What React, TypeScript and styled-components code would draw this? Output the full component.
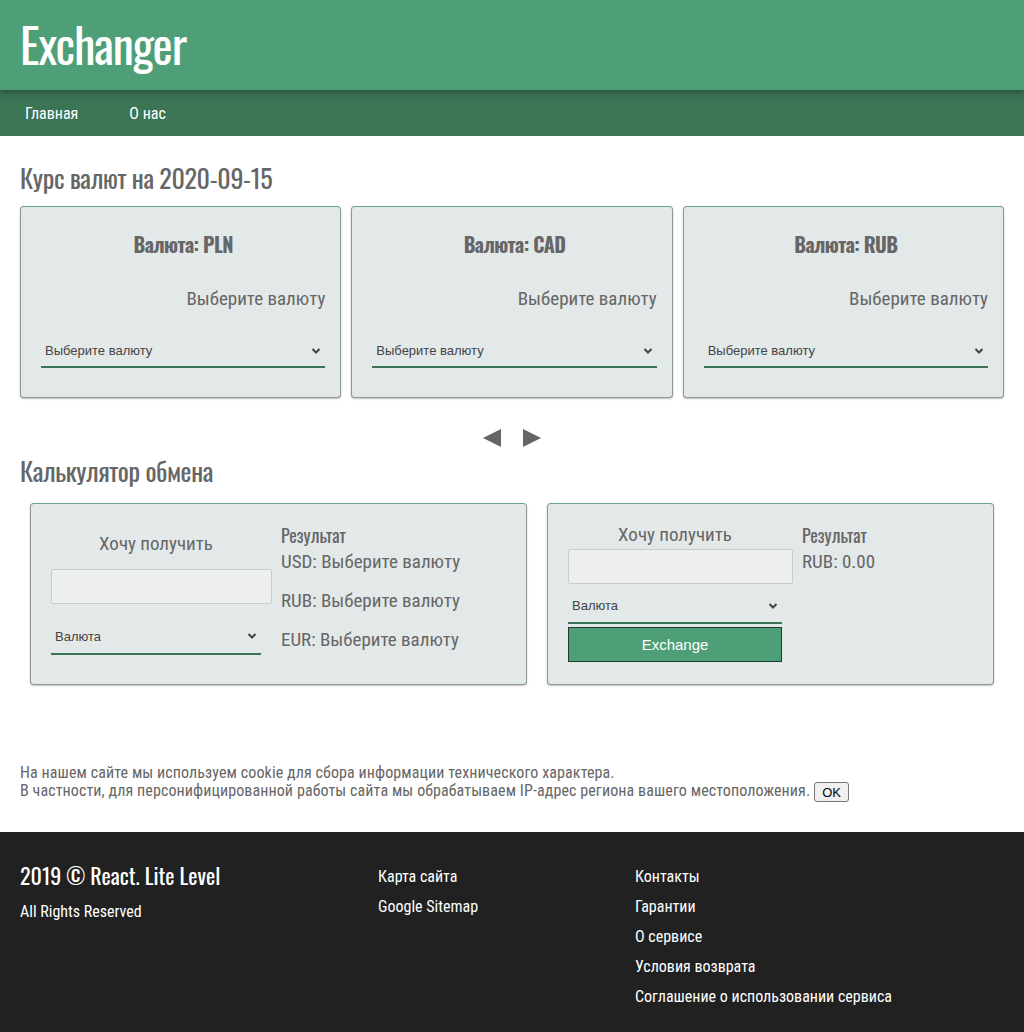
import React from "react";
import styled, { createGlobalStyle } from "styled-components";

const HEAD = `"Oswald", "DejaVu Sans Condensed", "Liberation Sans Narrow", sans-serif`;
const BODY = `"Roboto Condensed", "Liberation Sans Narrow", "Roboto", sans-serif`;
const FORM = `"Liberation Sans", Arial, sans-serif`;

const Global = createGlobalStyle`
  html, body { margin: 0; padding: 0; background: #fff; }
  body { font-family: ${BODY}; color: #666; }
  * { box-sizing: border-box; }
`;

const Header = styled.header`
  background: #4e9f77;
  height: 90px;
  display: flex;
  align-items: center;
  padding: 0 20px 3px;
  position: relative;
  z-index: 1;
  box-shadow: 0 3px 6px rgba(0, 0, 0, 0.3);
`;

const Logo = styled.h1`
  margin: 0;
  font-family: ${HEAD};
  font-weight: 400;
  font-size: 48px;
  letter-spacing: -1.1px;
  color: #fff;
  line-height: 1;
`;

const Nav = styled.nav`
  background: #3b7556;
  height: 46px;
  display: flex;
  align-items: center;
  padding: 0 25px;
  gap: 51px;
`;

const NavLink = styled.a`
  color: #fff;
  font-family: ${BODY};
  font-size: 16px;
  text-decoration: none;
`;

const Main = styled.main`
  padding: 0 20px;
`;

const SectionTitle = styled.h2<{ $top: number }>`
  margin: ${(p) => p.$top}px 0 0;
  font-family: ${HEAD};
  font-weight: 400;
  font-size: 26px;
  letter-spacing: -0.33px;
  line-height: 30px;
  color: #666;
`;

const RateRow = styled.div`
  display: grid;
  grid-template-columns: repeat(3, 1fr);
  gap: 10px;
  margin-top: 13px;
`;

const Card = styled.div`
  background: #e3e8e8;
  border: 1px solid #8d9893;
  border-top-color: #6aa486;
  border-radius: 4px;
  box-shadow: 0 1px 2px rgba(0, 0, 0, 0.25);
`;

const RateCard = styled(Card)`
  height: 192px;
  padding: 23px 15px 0 20px;
  display: flex;
  flex-direction: column;
`;

const RateTitle = styled.div`
  font-family: ${HEAD};
  font-weight: 700;
  font-size: 20px;
  letter-spacing: -0.6px;
  line-height: 28px;
  text-align: center;
  color: #666;
`;

const RateValue = styled.div`
  margin-top: 29px;
  font-family: ${BODY};
  font-size: 19px;
  line-height: 24px;
  text-align: right;
  color: #666;
`;

const SelectWrap = styled.div<{ $w?: number; $mt: number; $h: number }>`
  position: relative;
  width: ${(p) => (p.$w ? `${p.$w}px` : "100%")};
  margin-top: ${(p) => p.$mt}px;
  height: ${(p) => p.$h}px;
`;

const Select = styled.select`
  appearance: none;
  -webkit-appearance: none;
  width: 100%;
  height: 100%;
  border: none;
  border-bottom: 2px solid #3b7556;
  background: transparent;
  font-family: ${FORM};
  font-size: 13px;
  color: #444;
  padding: 0 20px 0 4px;
  outline: none;
`;

const Chevron = styled.svg`
  position: absolute;
  right: 4px;
  top: 50%;
  margin-top: -5px;
  pointer-events: none;
`;

const Arrows = styled.div`
  display: flex;
  justify-content: center;
  gap: 20px;
  margin-top: 30px;
  height: 20px;
`;

const CalcRow = styled.div`
  display: flex;
  gap: 20px;
  padding: 0 10px;
  margin-top: 17px;
`;

const CalcCard = styled(Card)<{ $w: number }>`
  width: ${(p) => p.$w}px;
  height: 182px;
  padding: 19px 20px;
  display: flex;
  gap: 20px;
`;

const InputCol = styled.div<{ $w: number; $lift: number }>`
  width: ${(p) => p.$w}px;
  display: flex;
  flex-direction: column;
  align-self: center;
  margin-top: ${(p) => -2 * p.$lift}px;
`;

const ColLabel = styled.div`
  font-family: ${BODY};
  font-size: 19px;
  line-height: 24px;
  text-align: center;
  color: #666;
`;

const Input = styled.input<{ $w: number; $mt: number }>`
  width: ${(p) => p.$w}px;
  height: 35px;
  margin-top: ${(p) => p.$mt}px;
  background: #eef0ef;
  border: 1px solid #c9cccb;
  border-radius: 2px;
  outline: none;
`;

const ExchangeButton = styled.button`
  margin-top: 3px;
  height: 35px;
  width: 100%;
  background: #4e9f77;
  border: 1px solid #1f3b2c;
  color: #fff;
  font-family: ${FORM};
  font-size: 15px;
`;

const ResultCol = styled.div`
  display: flex;
  flex-direction: column;
`;

const ResultTitle = styled.div`
  font-family: ${HEAD};
  font-weight: 400;
  font-size: 18px;
  line-height: 24px;
  color: #666;
`;

const ResultLine = styled.div<{ $mt: number }>`
  margin-top: ${(p) => p.$mt}px;
  font-family: ${BODY};
  font-size: 19px;
  line-height: 24px;
  color: #666;
`;

const Cookie = styled.div`
  margin-top: 79px;
  font-family: ${BODY};
  font-size: 16px;
  letter-spacing: 0.1px;
  line-height: 18px;
  color: #666;
`;

const OkButton = styled.button`
  font-family: ${FORM};
  font-size: 13px;
  letter-spacing: 0;
  padding: 0 7px;
  height: 20px;
  margin-left: 4px;
  border: 1px solid #777;
  border-radius: 3px;
  background: #f0f0f0;
  color: #000;
  vertical-align: middle;
`;

const Footer = styled.footer`
  margin-top: 30px;
  background: #212121;
  min-height: 210px;
  padding: 30px 20px 24px;
  display: grid;
  grid-template-columns: 358px 257px 1fr;
`;

const FooterCol = styled.div`
  display: flex;
  flex-direction: column;
`;

const FooterBrand = styled.div`
  font-family: ${HEAD};
  font-size: 22px;
  line-height: 26px;
  color: #fff;
`;

const FooterText = styled.div`
  margin-top: 14px;
  font-family: ${BODY};
  font-size: 16px;
  line-height: 20px;
  color: #fff;
`;

const FooterLink = styled.a`
  font-family: ${BODY};
  font-size: 16px;
  line-height: 30px;
  color: #fff;
  text-decoration: none;
`;

const ChevronIcon = () => (
  <Chevron width="10" height="8" viewBox="0 0 10 8">
    <path d="M1.5 2 L5 5.5 L8.5 2" fill="none" stroke="#444" strokeWidth="2" />
  </Chevron>
);

const Dropdown = ({
  label,
  w,
  mt,
  h,
}: {
  label: string;
  w?: number;
  mt: number;
  h: number;
}) => (
  <SelectWrap $w={w} $mt={mt} $h={h}>
    <Select defaultValue="">
      <option value="">{label}</option>
    </Select>
    <ChevronIcon />
  </SelectWrap>
);

const currencies = ["PLN", "CAD", "RUB"];

export default function App() {
  return (
    <>
      <Global />
      <Header>
        <Logo>Exchanger</Logo>
      </Header>
      <Nav>
        <NavLink href="#">Главная</NavLink>
        <NavLink href="#">О нас</NavLink>
      </Nav>
      <Main>
        <SectionTitle $top={27}>Курс валют на 2020-09-15</SectionTitle>
        <RateRow>
          {currencies.map((c) => (
            <RateCard key={c}>
              <RateTitle>Валюта: {c}</RateTitle>
              <RateValue>Выберите валюту</RateValue>
              <Dropdown label="Выберите валюту" mt={24} h={33} />
            </RateCard>
          ))}
        </RateRow>
        <Arrows>
          <svg width="20" height="20" viewBox="0 0 20 20">
            <path d="M19 1 L19 19 L1 10 Z" fill="#666" />
          </svg>
          <svg width="20" height="20" viewBox="0 0 20 20">
            <path d="M1 1 L1 19 L19 10 Z" fill="#666" />
          </svg>
        </Arrows>
        <SectionTitle $top={8}>Калькулятор обмена</SectionTitle>
        <CalcRow>
          <CalcCard $w={497}>
            <InputCol $w={210} $lift={1}>
              <ColLabel>Хочу получить</ColLabel>
              <Input $w={221} $mt={13} />
              <Dropdown label="Валюта" mt={16} h={35} />
            </InputCol>
            <ResultCol>
              <ResultTitle>Результат</ResultTitle>
              <ResultLine $mt={3}>USD: Выберите валюту</ResultLine>
              <ResultLine $mt={15}>RUB: Выберите валюту</ResultLine>
              <ResultLine $mt={15}>EUR: Выберите валюту</ResultLine>
            </ResultCol>
          </CalcCard>
          <CalcCard $w={447}>
            <InputCol $w={214} $lift={2}>
              <ColLabel>Хочу получить</ColLabel>
              <Input $w={225} $mt={2} />
              <Dropdown label="Валюта" mt={6} h={34} />
              <ExchangeButton>Exchange</ExchangeButton>
            </InputCol>
            <ResultCol>
              <ResultTitle>Результат</ResultTitle>
              <ResultLine $mt={3}>RUB: 0.00</ResultLine>
            </ResultCol>
          </CalcCard>
        </CalcRow>
        <Cookie>
          На нашем сайте мы используем cookie для сбора информации технического характера.
          <br />
          В частности, для персонифицированной работы сайта мы обрабатываем IP-адрес региона вашего
          местоположения.
          <OkButton>OK</OkButton>
        </Cookie>
      </Main>
      <Footer>
        <FooterCol>
          <FooterBrand>2019 © React. Lite Level</FooterBrand>
          <FooterText>All Rights Reserved</FooterText>
        </FooterCol>
        <FooterCol>
          <FooterLink href="#">Карта сайта</FooterLink>
          <FooterLink href="#">Google Sitemap</FooterLink>
        </FooterCol>
        <FooterCol>
          <FooterLink href="#">Контакты</FooterLink>
          <FooterLink href="#">Гарантии</FooterLink>
          <FooterLink href="#">О сервисе</FooterLink>
          <FooterLink href="#">Условия возврата</FooterLink>
          <FooterLink href="#">Соглашение о использовании сервиса</FooterLink>
        </FooterCol>
      </Footer>
    </>
  );
}
